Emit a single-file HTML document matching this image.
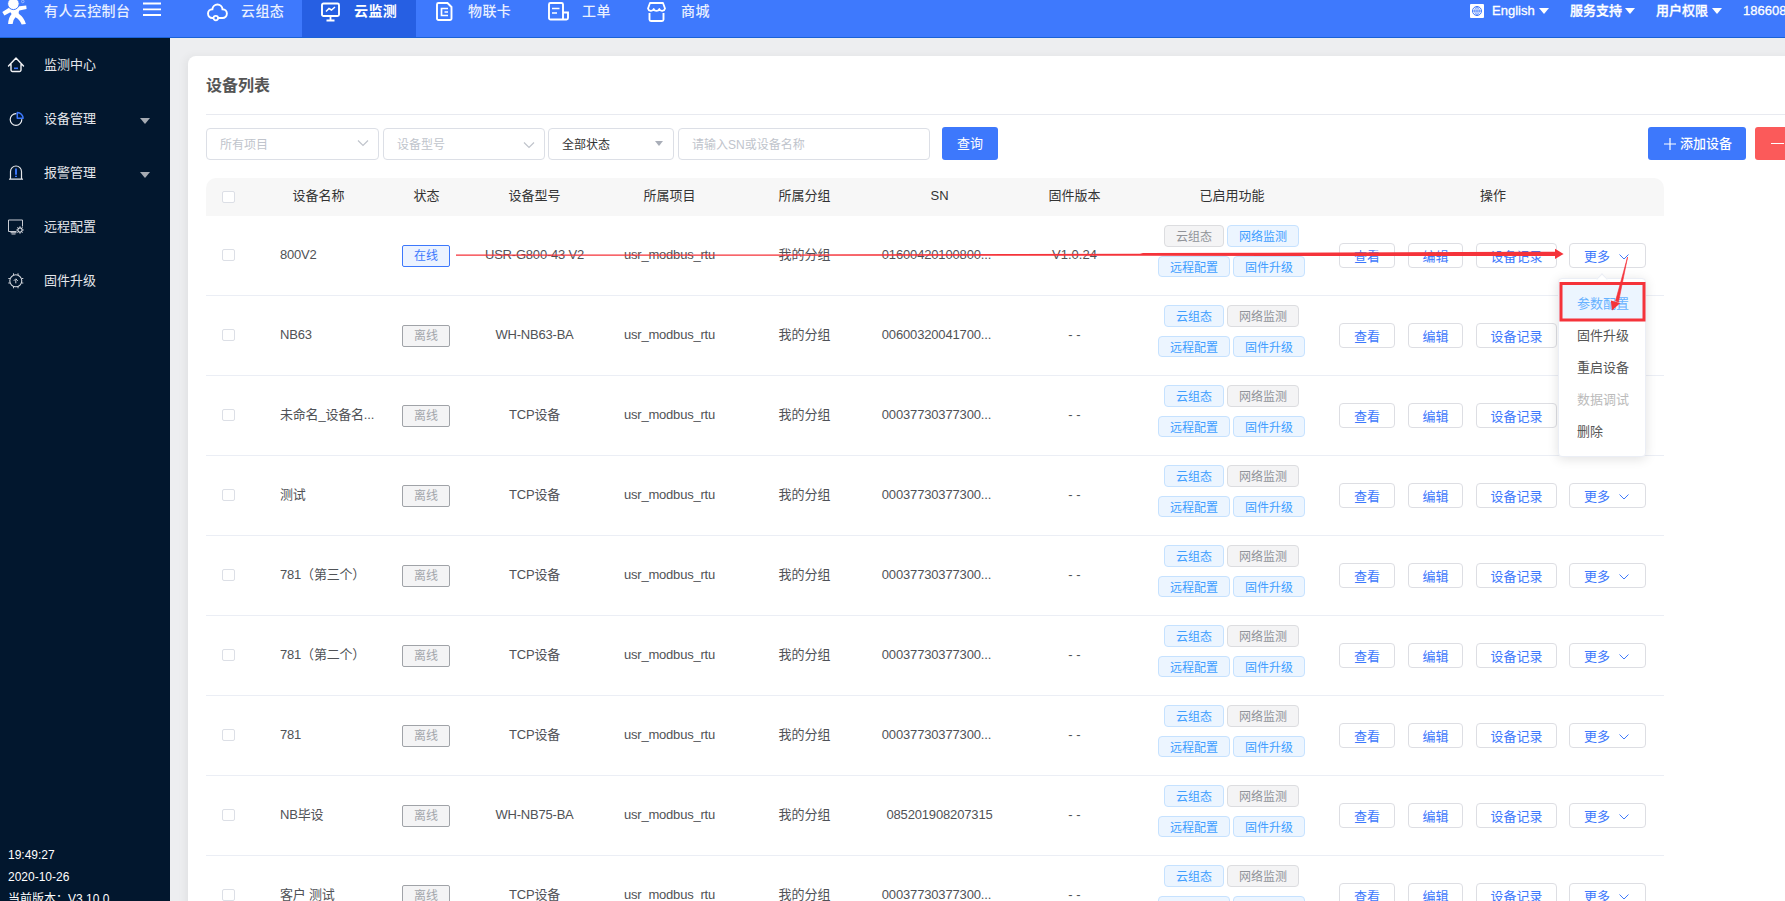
<!DOCTYPE html>
<html lang="zh-CN"><head><meta charset="utf-8"><title>设备列表</title>
<style>
*{box-sizing:border-box;margin:0;padding:0}
html,body{width:1785px;height:901px;overflow:hidden;background:#edeef0;font-family:"Liberation Sans","Noto Sans CJK SC",sans-serif;font-size:13px;color:#333}
i{font-style:normal}
.hdr{position:absolute;left:0;top:0;width:1785px;height:38px;background:#3e79fd;border-bottom:1px solid #1a62d6;color:#fff;font-size:14px;z-index:5}
.hdr span,.hdr svg{position:absolute;white-space:nowrap}
.hdr .t{top:1px;line-height:20px;font-weight:500;letter-spacing:.4px}
.hdr .act{left:302px;top:0;width:114px;height:37px;background:#265fe3}
.side{position:absolute;left:0;top:38px;width:170px;height:863px;background:#02172e;color:#e4e6ea;font-size:13px}
.side span,.side svg{position:absolute;white-space:nowrap}
.side .m{left:44px;line-height:20px;margin-top:1px}
.side .arr{left:140px;width:0;height:0;border-left:5px solid transparent;border-right:5px solid transparent;border-top:6px solid #a6abb3}
.side .ft{left:8px;font-size:12px;line-height:16px;color:#fff}
.main{position:absolute;left:170px;top:38px;width:1615px;height:863px;overflow:hidden}
.card{position:absolute;left:18px;top:18px;width:1700px;height:900px;background:#fff;border-radius:8px 0 0 0;box-shadow:-3px 0 8px rgba(0,0,0,.05)}
.title{position:absolute;left:18px;top:19px;font-size:16px;font-weight:bold;color:#555;line-height:22px}
.hr{position:absolute;left:18px;top:58px;width:1700px;height:1px;background:#e8eaf0}
.sel{position:absolute;top:72px;height:32px;border:1px solid #dcdfe6;border-radius:4px;background:#fff;font-size:12px;line-height:32px;padding-left:13px;color:#c0c4cc;white-space:nowrap}
.sel.dk{color:#333}
.sel svg{position:absolute}
.sel .tri{position:absolute;right:10px;top:12px;width:0;height:0;border-left:4px solid transparent;border-right:4px solid transparent;border-top:5px solid #a9aeb8}
.pbtn{position:absolute;top:71px;height:33px;border-radius:3px;background:#3d78fc;color:#fff;font-size:13px;line-height:33px;text-align:center;white-space:nowrap}
.pbtn.red{background:#fb5a5a}
.tbl{position:absolute;left:18px;top:122px;width:1458px;height:800px}
.thead{position:absolute;left:0;top:0;width:1458px;height:38px;background:#f7f7f7;border-radius:10px 10px 0 0}
.th{position:absolute;top:0;line-height:36px;text-align:center;font-size:13px;color:#333;white-space:nowrap}
.cb{position:absolute;width:13px;height:12px;border:1px solid #dcdfe6;border-radius:2px;background:#fff}
.tr{position:absolute;left:0;width:1458px;height:80px;border-bottom:1px solid #ebeef5}
.td{position:absolute;top:0;line-height:78px;text-align:center;font-size:13px;color:#505256;white-space:nowrap}
.td.name{left:74px;text-align:left}
.st{position:absolute;left:196px;top:29px;width:48px;height:22px;border:1px solid;border-radius:2px;font-size:12px;line-height:20px;text-align:center}
.st.on{background:#ecf3ff;border-color:#3d78fc;color:#3d78fc}
.st.off{background:#f4f4f5;border-color:#a0a3a8;color:#a3a6ab}
.tag{position:absolute;height:22px;border:1px solid;border-radius:4px;font-size:12px;line-height:21px;padding-top:.5px;text-align:center;white-space:nowrap}
.tag.b{background:#ecf5ff;border-color:#c6e2ff;color:#409eff}
.tag.g{background:#f4f4f5;border-color:#dcdde0;color:#909399}
.btn{position:absolute;top:27px;height:25px;border:1px solid #dddee3;border-radius:4px;background:#fff;color:#3d78fc;font-size:13px;line-height:25px;text-align:center;white-space:nowrap}
.btn.more{width:77px;text-align:left;padding-left:14px}
.chev{position:absolute;left:49px;top:10px;width:10px;height:6px}
.dd{position:absolute;left:1370px;top:222px;width:88px;height:179px;background:#fff;border:1px solid #ebeef5;border-radius:4px;box-shadow:0 2px 12px rgba(0,0,0,.12);font-size:13px}
.dd span{position:absolute;left:18px;line-height:32px;color:#555;white-space:nowrap}
.dd .hov{left:0;top:6px;width:86px;height:35px;background:#ecf5ff}
.dd .tip{left:39px;top:-4.500px;width:8px;height:8px;background:#fff;border-left:1px solid #ebeef5;border-top:1px solid #ebeef5;transform:rotate(45deg)}
.ann{position:absolute;left:0;top:0;width:1597px;height:845px;pointer-events:none}
.lat{letter-spacing:-.2px}
.lat2{letter-spacing:-.15px}
.tag.r2{height:21px;line-height:20px}

</style></head><body>
<div class="hdr">
<span class="act"></span>
<svg style="left:0;top:0" width="30" height="26" viewBox="0 0 30 26"><path d="M2.300 12 L9 7.800 Q13 10 17.500 6.400 L26.200 5.600 L26.600 9 L19.300 10.600 Q18.300 12.200 18.800 13.800 Q24 17.500 25.900 24 L21.700 24.600 Q19.800 19.500 15.500 17.200 Q13 19.500 12.600 24 L8.100 24 Q8.400 17.500 11.600 14 L10.400 12.200 L4.400 15.600 Z" fill="#fff"/><circle cx="13.400" cy="3.800" r="5.800" fill="#fff" stroke="#3d78fc" stroke-width="1"/><circle cx="22.800" cy="1.500" r="1.300" fill="none" stroke="#c9d8ff" stroke-width=".6"/></svg>
<span class="t" style="left:44px;color:#e8efff">有人云控制台</span>
<svg style="left:143px;top:2px" width="18" height="15" viewBox="0 0 18 15"><path d="M0 1.5h18M0 7.3h18M0 13h18" stroke="#fff" stroke-width="1.8"/></svg>
<svg style="left:206px;top:2px" width="23" height="21" viewBox="0 0 23 21"><path d="M7.300 16 H6.400 A4.400 4.400 0 0 1 6.400 7.200 A5.060 5.060 0 0 1 16.500 7.200 A4.400 4.400 0 0 1 16.500 16 H12.300" fill="none" stroke="#fff" stroke-width="1.900" stroke-linecap="round"/><circle cx="9.800" cy="16.100" r="2.300" fill="none" stroke="#fff" stroke-width="1.700"/></svg>
<span class="t" style="left:241px;color:#e8efff">云组态</span>
<svg style="left:321px;top:2px" width="20" height="20" viewBox="0 0 20 20"><rect x="1" y="1.5" width="17" height="12.5" rx="1.5" fill="none" stroke="#fff" stroke-width="1.9"/><path d="M9.5 14v4M5.5 18.5h8" stroke="#fff" stroke-width="1.8"/><path d="M5 9.5l3-3 2.5 1.5 3.5-3" fill="none" stroke="#fff" stroke-width="1.5"/></svg>
<span class="t" style="left:354px;font-weight:bold">云监测</span>
<svg style="left:436px;top:2px" width="17" height="19" viewBox="0 0 17 19"><path d="M2.5 1h9l4 4v11.5a1.5 1.5 0 0 1-1.500 1.500h-11.500a1.500 1.500 0 0 1-1.500-1.500v-14a1.500 1.500 0 0 1 1.500-1.500z" fill="none" stroke="#fff" stroke-width="1.9"/><path d="M12 6.500h-6.500v7h6.500M8.500 10h3.500" fill="none" stroke="#fff" stroke-width="1.7"/></svg>
<span class="t" style="left:468px;color:#e8efff">物联卡</span>
<svg style="left:548px;top:2px" width="21" height="19" viewBox="0 0 21 19"><path d="M15 17.500h-12.500a1.500 1.500 0 0 1-1.500-1.500v-13.500a1.500 1.500 0 0 1 1.500-1.500h11a1.500 1.500 0 0 1 1.500 1.500v15zh3.500a1.500 1.500 0 0 0 1.500-1.500v-5.500h-5" fill="none" stroke="#fff" stroke-width="1.900"/><path d="M4 6.500h7.500M4 11h5" stroke="#fff" stroke-width="1.700"/></svg>
<span class="t" style="left:582px;color:#e8efff">工单</span>
<svg style="left:647px;top:2px" width="19" height="20" viewBox="0 0 19 20"><path d="M3 1h13l2 5.500a3 3 0 0 1-5.700 0.500a3 3 0 0 1-5.600 0a3 3 0 0 1-5.700-0.500z" fill="none" stroke="#fff" stroke-width="1.800" stroke-linejoin="round"/><path d="M2.500 11v6.500a1.500 1.500 0 0 0 1.500 1.500h11a1.500 1.500 0 0 0 1.500-1.500v-6.500" fill="none" stroke="#fff" stroke-width="1.900"/></svg>
<span class="t" style="left:681px;color:#e8efff">商城</span>
<svg style="left:1470px;top:4px" width="14" height="14" viewBox="0 0 14 14"><rect width="14" height="14" rx="1" fill="#fff"/><circle cx="7" cy="7" r="4.500" fill="none" stroke="#3d78fc" stroke-width="1"/><path d="M2.500 7h9M7 2.500v9M7 2.500c-3 2.500-3 6.500 0 9c3-2.500 3-6.500 0-9" fill="none" stroke="#3d78fc" stroke-width=".8"/></svg>
<span class="t" style="left:1492px;top:1px;font-size:13px;letter-spacing:0;-webkit-text-stroke:.3px #fff">English</span>
<svg style="left:1539px;top:8px" width="10" height="6" viewBox="0 0 10 6"><path d="M0 0h10l-5 6z" fill="#fff"/></svg>
<span class="t" style="left:1570px;top:1px;font-size:13px;letter-spacing:0;-webkit-text-stroke:.3px #fff">服务支持</span>
<svg style="left:1625px;top:8px" width="10" height="6" viewBox="0 0 10 6"><path d="M0 0h10l-5 6z" fill="#fff"/></svg>
<span class="t" style="left:1656px;top:1px;font-size:13px;letter-spacing:0;-webkit-text-stroke:.3px #fff">用户权限</span>
<svg style="left:1712px;top:8px" width="10" height="6" viewBox="0 0 10 6"><path d="M0 0h10l-5 6z" fill="#fff"/></svg>
<span class="t" style="left:1743px;top:1px;font-size:13px;letter-spacing:0;-webkit-text-stroke:.3px #fff">18660812345</span>
</div>
<div class="side">
<svg style="left:7px;top:18px" width="18" height="17" viewBox="0 0 18 17"><path d="M1.500 10 L9 2 L16.500 10 M4 8.500 V14 a1.500 1.500 0 0 0 1.500 1.500 h7 a1.500 1.500 0 0 0 1.500 -1.500 V8.500" fill="none" stroke="#f2f3f6" stroke-width="1.400" stroke-linejoin="round" stroke-linecap="round"/><path d="M7 12.300h4" stroke="#3d78fc" stroke-width="1.600"/></svg>
<span class="m" style="top:16px">监测中心</span>
<svg style="left:8px;top:73px" width="17" height="17" viewBox="0 0 17 17"><path d="M8 2.700 A5.800 5.800 0 1 0 13.800 8.500" fill="none" stroke="#eceef2" stroke-width="1.200" stroke-linecap="round"/><path d="M9.300 1.400 A6 6 0 0 1 15.100 7.300 H9.300 Z" fill="none" stroke="#3d78fc" stroke-width="1.500" stroke-linejoin="round"/></svg>
<span class="m" style="top:70px">设备管理</span><span class="arr" style="top:80px"></span>
<svg style="left:8px;top:126px" width="16" height="18" viewBox="0 0 16 18"><path d="M2.500 14.500 V7.500 a5.500 5.500 0 0 1 11 0 V14.500 M1.500 15.200 h13" fill="none" stroke="#e4e6ea" stroke-width="1.200" stroke-linecap="round"/><path d="M8 4.500v6.200M8 11.800v1.300" stroke="#3d78fc" stroke-width="1.900"/></svg>
<span class="m" style="top:124px">报警管理</span><span class="arr" style="top:134px"></span>
<svg style="left:7px;top:180px" width="19" height="17" viewBox="0 0 19 17"><path d="M9.500 13.500 H1.500 V2 H15.500 V8.500 M4.500 16 h4 M3.500 14.700 h6" fill="none" stroke="#c9ccd3" stroke-width="1"/><circle cx="13" cy="12" r="2.100" fill="none" stroke="#d5d8de" stroke-width="1.100"/><path d="M13 8.300v1.500M13 14.200v1.500M9.300 12h1.500M15.200 12h1.500M10.400 9.400l1 1M14.600 13.600l1 1M15.600 9.400l-1 1M11.400 13.600l-1 1" stroke="#d5d8de" stroke-width="1"/></svg>
<span class="m" style="top:178px">远程配置</span>
<svg style="left:7px;top:233px" width="18" height="19" viewBox="0 0 18 19"><circle cx="8.800" cy="9.800" r="6" fill="none" stroke="#d5d8de" stroke-width="1.100"/><path d="M6.500 2.300v1.700M11 2.300v1.700M6.500 15.600v1.700M11 15.600v1.700M1.300 7.500h1.700M1.300 12h1.700M14.600 7.500h1.700M14.600 12h1.700" stroke="#c9ccd3" stroke-width="1"/><path d="M8.800 12.300v-3.500M6.800 9.800l2-2 2 2" fill="none" stroke="#d5d8de" stroke-width="1"/></svg>
<span class="m" style="top:232px">固件升级</span>
<span class="ft" style="top:809px">19:49:27</span>
<span class="ft" style="top:831px">2020-10-26</span>
<span class="ft" style="top:853px">当前版本：V3.10.0</span>
</div>
<div class="main"><div class="card">
<div class="title">设备列表</div>
<div class="hr"></div>
<div class="sel" style="left:18px;width:173px">所有项目<svg style="right:9px;top:10px" width="12" height="8" viewBox="0 0 12 8"><path d="M1 1.500l5 5 5-5" fill="none" stroke="#c0c4cc" stroke-width="1.200"/></svg></div>
<div class="sel" style="left:195px;width:162px">设备型号<svg style="right:9px;top:12px" width="12" height="8" viewBox="0 0 12 8"><path d="M1 1.500l5 5 5-5" fill="none" stroke="#c0c4cc" stroke-width="1.200"/></svg></div>
<div class="sel dk" style="left:360px;width:126px">全部状态<i class="tri"></i></div>
<div class="sel" style="left:490px;width:252px">请输入SN或设备名称</div>
<div class="pbtn" style="left:754px;width:56px">查询</div>
<div class="pbtn" style="left:1460px;width:98px;font-weight:500"><svg style="position:absolute;left:16px;top:11px" width="12" height="12" viewBox="0 0 12 12"><path d="M6 0v12M0 6h12" stroke="#fff" stroke-width="1.200"/></svg><span style="position:absolute;left:32px;top:0">添加设备</span></div>
<div class="pbtn red" style="left:1567px;width:100px"><i style="position:absolute;left:16px;top:16px;width:13px;height:1.300px;background:#fff"></i></div>
<div class="tbl">
<div class="thead"><span class="cb" style="left:16px;top:13px"></span><span class="th" style="left:45px;width:135px">设备名称</span><span class="th" style="left:180px;width:81px">状态</span><span class="th" style="left:261px;width:135px">设备型号</span><span class="th" style="left:396px;width:135px">所属项目</span><span class="th" style="left:531px;width:135px">所属分组</span><span class="th" style="left:666px;width:135px">SN</span><span class="th" style="left:801px;width:135px">固件版本</span><span class="th" style="left:936px;width:180px">已启用功能</span><span class="th" style="left:1116px;width:342px">操作</span></div>
<div class="tr" style="top:38px"><span class="cb" style="left:16px;top:33px"></span><span class="td name lat">800V2</span><span class="st on">在线</span><span class="td lat" style="left:261px;width:135px">USR-G800-43 V2</span><span class="td lat" style="left:396px;width:135px">usr_modbus_rtu</span><span class="td" style="left:531px;width:135px">我的分组</span><span class="td lat2" style="left:663px;width:135px">01600420100800...</span><span class="td" style="left:801px;width:135px">V1.0.24</span><span class="tag g" style="left:958px;top:9px;width:60px">云组态</span><span class="tag b" style="left:1021px;top:9px;width:72px">网络监测</span><span class="tag b r2" style="left:952px;top:40px;width:72px">远程配置</span><span class="tag b r2" style="left:1027px;top:40px;width:72px">固件升级</span><span class="btn" style="left:1133px;width:56px">查看</span><span class="btn" style="left:1202px;width:55px">编辑</span><span class="btn" style="left:1270px;width:81px">设备记录</span><span class="btn more" style="left:1363px">更多<svg class="chev" viewBox="0 0 10 6"><path d="M.5 .5l4.500 4.500 4.500-4.500" fill="none" stroke="#3d78fc" stroke-width="1"/></svg></span></div>
<div class="tr" style="top:118px"><span class="cb" style="left:16px;top:33px"></span><span class="td name lat">NB63</span><span class="st off">离线</span><span class="td lat" style="left:261px;width:135px">WH-NB63-BA</span><span class="td lat" style="left:396px;width:135px">usr_modbus_rtu</span><span class="td" style="left:531px;width:135px">我的分组</span><span class="td lat2" style="left:663px;width:135px">00600320041700...</span><span class="td" style="left:801px;width:135px">- -</span><span class="tag b" style="left:958px;top:9px;width:60px">云组态</span><span class="tag g" style="left:1021px;top:9px;width:72px">网络监测</span><span class="tag b r2" style="left:952px;top:40px;width:72px">远程配置</span><span class="tag b r2" style="left:1027px;top:40px;width:72px">固件升级</span><span class="btn" style="left:1133px;width:56px">查看</span><span class="btn" style="left:1202px;width:55px">编辑</span><span class="btn" style="left:1270px;width:81px">设备记录</span></div>
<div class="tr" style="top:198px"><span class="cb" style="left:16px;top:33px"></span><span class="td name lat">未命名_设备名...</span><span class="st off">离线</span><span class="td lat" style="left:261px;width:135px">TCP设备</span><span class="td lat" style="left:396px;width:135px">usr_modbus_rtu</span><span class="td" style="left:531px;width:135px">我的分组</span><span class="td lat2" style="left:663px;width:135px">00037730377300...</span><span class="td" style="left:801px;width:135px">- -</span><span class="tag b" style="left:958px;top:9px;width:60px">云组态</span><span class="tag g" style="left:1021px;top:9px;width:72px">网络监测</span><span class="tag b r2" style="left:952px;top:40px;width:72px">远程配置</span><span class="tag b r2" style="left:1027px;top:40px;width:72px">固件升级</span><span class="btn" style="left:1133px;width:56px">查看</span><span class="btn" style="left:1202px;width:55px">编辑</span><span class="btn" style="left:1270px;width:81px">设备记录</span></div>
<div class="tr" style="top:278px"><span class="cb" style="left:16px;top:33px"></span><span class="td name lat">测试</span><span class="st off">离线</span><span class="td lat" style="left:261px;width:135px">TCP设备</span><span class="td lat" style="left:396px;width:135px">usr_modbus_rtu</span><span class="td" style="left:531px;width:135px">我的分组</span><span class="td lat2" style="left:663px;width:135px">00037730377300...</span><span class="td" style="left:801px;width:135px">- -</span><span class="tag b" style="left:958px;top:9px;width:60px">云组态</span><span class="tag g" style="left:1021px;top:9px;width:72px">网络监测</span><span class="tag b r2" style="left:952px;top:40px;width:72px">远程配置</span><span class="tag b r2" style="left:1027px;top:40px;width:72px">固件升级</span><span class="btn" style="left:1133px;width:56px">查看</span><span class="btn" style="left:1202px;width:55px">编辑</span><span class="btn" style="left:1270px;width:81px">设备记录</span><span class="btn more" style="left:1363px">更多<svg class="chev" viewBox="0 0 10 6"><path d="M.5 .5l4.500 4.500 4.500-4.500" fill="none" stroke="#3d78fc" stroke-width="1"/></svg></span></div>
<div class="tr" style="top:358px"><span class="cb" style="left:16px;top:33px"></span><span class="td name lat">781（第三个）</span><span class="st off">离线</span><span class="td lat" style="left:261px;width:135px">TCP设备</span><span class="td lat" style="left:396px;width:135px">usr_modbus_rtu</span><span class="td" style="left:531px;width:135px">我的分组</span><span class="td lat2" style="left:663px;width:135px">00037730377300...</span><span class="td" style="left:801px;width:135px">- -</span><span class="tag b" style="left:958px;top:9px;width:60px">云组态</span><span class="tag g" style="left:1021px;top:9px;width:72px">网络监测</span><span class="tag b r2" style="left:952px;top:40px;width:72px">远程配置</span><span class="tag b r2" style="left:1027px;top:40px;width:72px">固件升级</span><span class="btn" style="left:1133px;width:56px">查看</span><span class="btn" style="left:1202px;width:55px">编辑</span><span class="btn" style="left:1270px;width:81px">设备记录</span><span class="btn more" style="left:1363px">更多<svg class="chev" viewBox="0 0 10 6"><path d="M.5 .5l4.500 4.500 4.500-4.500" fill="none" stroke="#3d78fc" stroke-width="1"/></svg></span></div>
<div class="tr" style="top:438px"><span class="cb" style="left:16px;top:33px"></span><span class="td name lat">781（第二个）</span><span class="st off">离线</span><span class="td lat" style="left:261px;width:135px">TCP设备</span><span class="td lat" style="left:396px;width:135px">usr_modbus_rtu</span><span class="td" style="left:531px;width:135px">我的分组</span><span class="td lat2" style="left:663px;width:135px">00037730377300...</span><span class="td" style="left:801px;width:135px">- -</span><span class="tag b" style="left:958px;top:9px;width:60px">云组态</span><span class="tag g" style="left:1021px;top:9px;width:72px">网络监测</span><span class="tag b r2" style="left:952px;top:40px;width:72px">远程配置</span><span class="tag b r2" style="left:1027px;top:40px;width:72px">固件升级</span><span class="btn" style="left:1133px;width:56px">查看</span><span class="btn" style="left:1202px;width:55px">编辑</span><span class="btn" style="left:1270px;width:81px">设备记录</span><span class="btn more" style="left:1363px">更多<svg class="chev" viewBox="0 0 10 6"><path d="M.5 .5l4.500 4.500 4.500-4.500" fill="none" stroke="#3d78fc" stroke-width="1"/></svg></span></div>
<div class="tr" style="top:518px"><span class="cb" style="left:16px;top:33px"></span><span class="td name lat">781</span><span class="st off">离线</span><span class="td lat" style="left:261px;width:135px">TCP设备</span><span class="td lat" style="left:396px;width:135px">usr_modbus_rtu</span><span class="td" style="left:531px;width:135px">我的分组</span><span class="td lat2" style="left:663px;width:135px">00037730377300...</span><span class="td" style="left:801px;width:135px">- -</span><span class="tag b" style="left:958px;top:9px;width:60px">云组态</span><span class="tag g" style="left:1021px;top:9px;width:72px">网络监测</span><span class="tag b r2" style="left:952px;top:40px;width:72px">远程配置</span><span class="tag b r2" style="left:1027px;top:40px;width:72px">固件升级</span><span class="btn" style="left:1133px;width:56px">查看</span><span class="btn" style="left:1202px;width:55px">编辑</span><span class="btn" style="left:1270px;width:81px">设备记录</span><span class="btn more" style="left:1363px">更多<svg class="chev" viewBox="0 0 10 6"><path d="M.5 .5l4.500 4.500 4.500-4.500" fill="none" stroke="#3d78fc" stroke-width="1"/></svg></span></div>
<div class="tr" style="top:598px"><span class="cb" style="left:16px;top:33px"></span><span class="td name lat">NB毕设</span><span class="st off">离线</span><span class="td lat" style="left:261px;width:135px">WH-NB75-BA</span><span class="td lat" style="left:396px;width:135px">usr_modbus_rtu</span><span class="td" style="left:531px;width:135px">我的分组</span><span class="td lat2" style="left:666px;width:135px">085201908207315</span><span class="td" style="left:801px;width:135px">- -</span><span class="tag b" style="left:958px;top:9px;width:60px">云组态</span><span class="tag g" style="left:1021px;top:9px;width:72px">网络监测</span><span class="tag b r2" style="left:952px;top:40px;width:72px">远程配置</span><span class="tag b r2" style="left:1027px;top:40px;width:72px">固件升级</span><span class="btn" style="left:1133px;width:56px">查看</span><span class="btn" style="left:1202px;width:55px">编辑</span><span class="btn" style="left:1270px;width:81px">设备记录</span><span class="btn more" style="left:1363px">更多<svg class="chev" viewBox="0 0 10 6"><path d="M.5 .5l4.500 4.500 4.500-4.500" fill="none" stroke="#3d78fc" stroke-width="1"/></svg></span></div>
<div class="tr" style="top:678px"><span class="cb" style="left:16px;top:33px"></span><span class="td name lat">客户 测试</span><span class="st off">离线</span><span class="td lat" style="left:261px;width:135px">TCP设备</span><span class="td lat" style="left:396px;width:135px">usr_modbus_rtu</span><span class="td" style="left:531px;width:135px">我的分组</span><span class="td lat2" style="left:663px;width:135px">00037730377300...</span><span class="td" style="left:801px;width:135px">- -</span><span class="tag b" style="left:958px;top:9px;width:60px">云组态</span><span class="tag g" style="left:1021px;top:9px;width:72px">网络监测</span><span class="tag b r2" style="left:952px;top:40px;width:72px">远程配置</span><span class="tag b r2" style="left:1027px;top:40px;width:72px">固件升级</span><span class="btn" style="left:1133px;width:56px">查看</span><span class="btn" style="left:1202px;width:55px">编辑</span><span class="btn" style="left:1270px;width:81px">设备记录</span><span class="btn more" style="left:1363px">更多<svg class="chev" viewBox="0 0 10 6"><path d="M.5 .5l4.500 4.500 4.500-4.500" fill="none" stroke="#3d78fc" stroke-width="1"/></svg></span></div>
</div>
<div class="dd"><span class="tip"></span><span class="hov"></span>
<span style="top:9px;color:#66b1ff">参数配置</span>
<span style="top:41px">固件升级</span>
<span style="top:73px">重启设备</span>
<span style="top:105px;color:#bbb">数据调试</span>
<span style="top:137px">删除</span>
</div>
<svg class="ann" viewBox="188 56 1597 845">
<rect x="1561" y="283.500" width="83" height="36.500" fill="none" stroke="#f5333a" stroke-width="3"/>
<path d="M456 254.600 L867 254.300 L1140 253.700 L1143 253.100 L1556 251.700 L1556 256.100 L1143 255.800 L456 255.800 Z" fill="#f5333a"/>
<path d="M1555 248.800 L1563.600 253.900 L1555 259 Z" fill="#f5333a"/>
<path d="M1627.600 257 L1615.500 301 L1618.500 302 Z" fill="#f5333a" stroke="#f5333a" stroke-width=".6"/>
<path d="M1610.800 300.500 L1620.300 303 L1612 310.500 Z" fill="#f5333a"/>
</svg>
</div></div>
</body></html>
